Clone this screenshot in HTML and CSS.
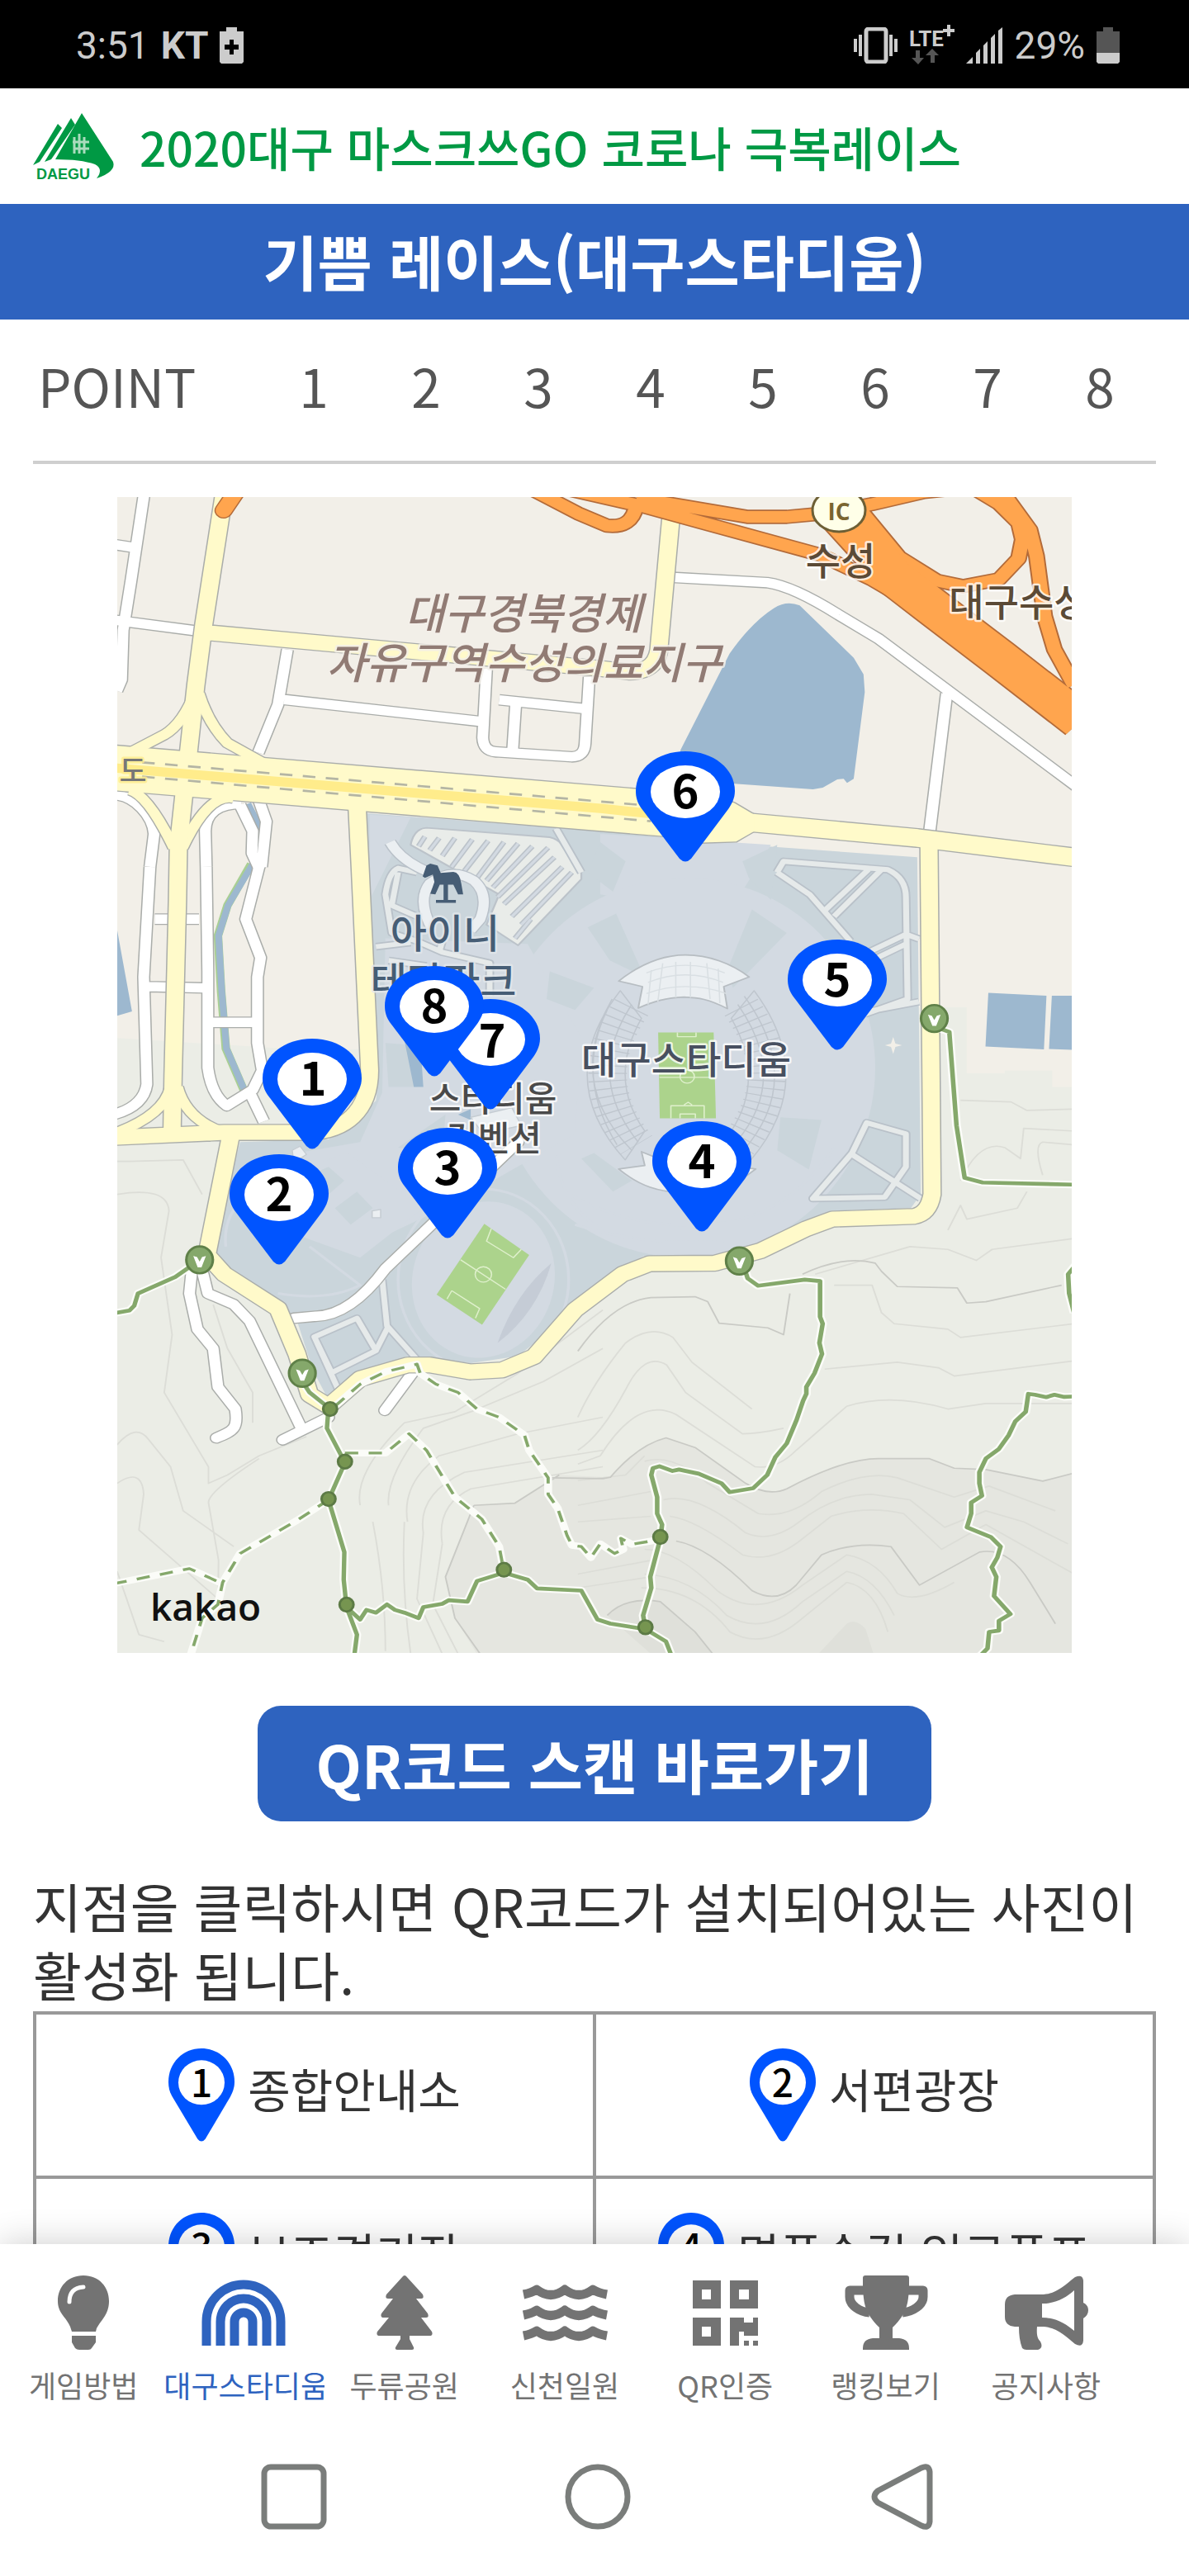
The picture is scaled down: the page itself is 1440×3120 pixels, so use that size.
FILE: index.html
```html
<!DOCTYPE html>
<html lang="ko">
<head>
<meta charset="utf-8">
<meta name="viewport" content="width=device-width, initial-scale=1">
<title>기쁨 레이스(대구스타디움)</title>
<link rel="stylesheet" href="styles.css">
</head>
<body>
<svg class="defs" aria-hidden="true">
  <symbol id="pin" viewBox="0 0 120 134" preserveAspectRatio="none">
    <path fill="#0054ff" d="M60 0C94 0 120 21 120 48C120 57 116 64 112 70L67 130Q60 137 53 130L6 68C2 62 0 56 0 48C0 21 26 0 60 0Z"/>
    <ellipse cx="60" cy="49" rx="42" ry="32" fill="#fff"/>
  </symbol>
</svg>

<div class="status">
  <div class="status-side">
    <span>3:51</span>
    <b>KT</b>
    <svg width="29" height="44" viewBox="0 0 29 44"><path fill="#ccc" fill-rule="evenodd" d="M8 0H21V5H29V42L27 44H2L0 42V5H8ZM12 15V21H6V27H12V33H17V27H23V21H17V15Z"/></svg>
  </div>
  <div class="status-side">
    <svg width="53" height="44" viewBox="0 0 53 44"><g fill="none" stroke="#ccc"><rect x="15" y="2" width="24" height="40" rx="3" stroke-width="5"/><path stroke-width="4" d="M2 14V30M8 9V35M45 9V35M51 14V30"/></g></svg>
    <svg width="55" height="50" viewBox="0 0 55 50"><text x="0" y="26" class="lte">LTE</text><path fill="none" stroke="#ccc" stroke-width="4" d="M41 7H55M48 0V14"/><path fill="#555" d="M8 31H13V40H18L11 48L3 40H8ZM28 29L36 37H31V46H26V37H20Z"/></svg>
    <svg width="45" height="44" viewBox="0 0 45 44"><path fill="#ccc" d="M0 44L8 36V44ZM12 44V31L17 26V44ZM21 44V22L26 17V44ZM30 44V13L35 8V44ZM39 44V4L44 0V44Z"/></svg>
    <span>29%</span>
    <svg width="28" height="44" viewBox="0 0 28 44"><path fill="#555" d="M8 0H20V5H28V31H0V5H8Z"/><path fill="#ccc" d="M0 31H28V42L26 44H2L0 42Z"/></svg>
  </div>
</div>

<header class="brand">
  <svg width="99" height="82" viewBox="0 0 99 82" role="img" aria-label="DAEGU">
    <g fill="#009944"><path d="M59 1L97 60Q101 72 77 80Q86 69 75 63Q58 57 27 57Z"/><path d="M46 7L51 15L22 57L14 60ZM30 14L35 19L8 60L0 64Z"/></g>
    <path fill="none" stroke="#a9dcbd" stroke-width="3" d="M50 30V50M56 26V50M62 30V50M48 36H68M50 44H68"/>
    <text x="4" y="81" class="logo-text">DAEGU</text>
  </svg>
  <span class="brand-name">2020대구 마스크쓰GO 코로나 극복레이스</span>
</header>
<h1 class="title">기쁨 레이스(대구스타디움)</h1>

<main class="content">
  <ol class="points">
    <li class="points-label">POINT</li>
    <li>1</li><li>2</li><li>3</li><li>4</li><li>5</li><li>6</li><li>7</li><li>8</li>
  </ol>

  <svg class="map" viewBox="142 602 1156 1400">
    <defs>
      <g id="roads-white">
        <path d="M117 20L75 340L50 520L45 700L30 740M20 208L75 218M20 483L280 522M570 590L540 790L478 965M560 772L1185 852M1200 660L1188 910Q1190 960 1230 962L1470 980Q1510 980 1512 930L1525 690M1240 773L1510 805M1292 795L1283 950M20 1118C90 1120 145 1200 148 1260L135 1380M425 1150C370 1150 310 1170 310 1250L313 1380M480 1140L503 1215L488 1380M420 1155L460 1250L458 1330L478 1380"/>
        <g transform="translate(0 1380)">
          <path d="M135 0L115 400L125 790Q115 870 20 900M313 0L318 380V730Q330 830 378 868L460 810L490 740L475 640V400L485 330L438 190L480 0L488 -20M150 190H290M130 435L305 440M330 565H465M455 830L495 925"/>
        </g>
        <g transform="translate(0 2730)">
          <path d="M268 110L260 200L285 330L335 400L350 540L405 620C415 690 400 700 345 725M303 130L318 200L400 240L450 300L612 685M555 732L700 650M878 625L965 490M1300 -350L880 110Q770 280 660 283L590 290" stroke-linecap="round"/>
        </g>
        <g transform="translate(1489) scale(1.033 1)">
          <path d="M290 328L580 347Q660 360 800 465L920 550L1530 1090M1130 750L1078 1250"/>
        </g>
      </g>
      <g id="roads-yellow">
        <path d="M370 20L305 500L280 720L225 1300L222 1500L208 2140L205 2330M310 528L1568 660L1654 672Q1745 670 1747 570L1786 80M790 1150L800 1380L830 2120C830 2270 750 2340 640 2345L370 2345L20 2363M390 2360L315 2790L370 2860L540 2985L600 3150L640 3298L700 3340L800 3240L950 3190H1020L1150 3215L1250 3208L1350 3160L1480 2990L1630 2860L1716 2822L1923 2820L2067 2775L2212 2695L2295 2660L2553 2650Q2600 2640 2610 2570L2600 1270"/>
      </g>
      <g id="roads-ramp">
        <path d="M280 740Q240 860 180 900L80 960M290 750Q320 860 380 930L490 1000M70 1100Q130 1120 210 1310M400 1130Q320 1110 238 1310M200 2180Q180 2280 30 2345M222 2180Q250 2300 370 2345"/>
      </g>
      <g id="road-main"><path d="M0 1018L1900 1200"/></g>
      <g id="road-main-east"><path d="M1900 1204L2047 1220L2563 1275L3080 1348"/></g>
      <g id="road-taper"><path d="M1880 1100L1985 1148L2047 1190V1250L1990 1288L1880 1292Z"/></g>
      <g id="highway" transform="translate(1489) scale(1.033 1)">
        <path d="M-60 0L200 70L400 135L740 245L900 335L1080 460M180 40L520 108H640L760 95L900 62L1060 18L1200 0M-170 -10L0 95L90 140Q165 150 178 70M870 90L985 255L1100 340L1180 360L1290 335L1350 260L1362 190L1350 130L1290 60L1220 10M1290 0L1385 155L1405 250L1430 470L1460 590L1520 720"/>
      </g>
      <g id="highway-wide" transform="translate(1489) scale(1.033 1)"><path d="M770 60L900 230L960 320L1080 430L1290 620L1540 850"/></g>
      <g id="trails">
        <g transform="translate(0 2730)">
          <path d="M20 272L70 262L85 245L97 200L215 140L290 80M617 520L640 560L700 615L695 690L752 815L700 950L750 1140L748 1240L757 1340L790 1440L780 1530M757 1340L800 1385L820 1350L850 1360L885 1330L910 1350L940 1360L985 1380L1000 1340L1060 1328L1080 1315L1140 1320L1170 1245L1255 1215L1330 1240L1360 1272L1500 1280L1551 1385L1592 1400L1703 1420L1768 1465L1790 1530"/>
        </g>
        <g transform="translate(1489 2730) scale(1.033 1)">
          <path d="M505 90L520 145L552 172L695 150L742 155V285L750 310L740 380L748 420L725 490L700 540V565L690 590L670 660L640 745L605 795L580 860L537 908L465 922L440 890L370 855L310 840L290 845L250 828L230 835L225 860L243 940V1000L258 1040L253 1090L222 1230L225 1270L200 1370L207 1420M1530 574L1490 576L1460 568L1435 577L1400 568L1380 565L1372 630L1340 665L1320 715L1290 765L1250 800L1230 850V890L1238 935L1205 960V1000L1192 1050L1265 1085L1295 1120L1285 1160L1268 1195L1282 1230L1275 1300L1325 1365L1290 1390V1425L1260 1430L1255 1490L1230 1520M1530 90L1502 130L1505 200L1520 270M1092 -770L1138 -750L1160 -410L1185 -220L1240 -203L1530 -195"/>
        </g>
      </g>
      <g id="trails-dashed">
        <g transform="translate(0 2730)">
          <path d="M720 610L800 530L880 485L980 457L990 490L1040 530L1110 560L1170 620L1240 650L1320 715L1335 770L1395 870V930L1425 980L1455 1080L1470 1115L1500 1120L1530 1160L1560 1110L1605 1145L1633 1130L1625 1090L1660 1112L1745 1095M752 780H880L955 710L1010 770L1100 940L1185 1020L1240 1120L1255 1210M700 950L600 1025L420 1145L365 1250L350 1330L300 1380L262 1520M20 1255L260 1200L365 1255"/>
        </g>
      </g>
      <g id="gate"><ellipse rx="42" ry="49" fill="#85a86b" stroke="#5f8048" stroke-width="8"/><path fill="#fff" d="M-20 -14L-8 -10L0 6L8 -10L20 -14L6 27H-6Z"/></g>
      <g id="node"><ellipse rx="22" ry="25" fill="#769550" stroke="#5c7a45" stroke-width="8"/></g>
    </defs>

    <rect x="142" y="602" width="1156" height="1400" fill="#f2efe8"/>
    <g transform="translate(130 590) scale(.3827 .3333)" fill="none" stroke-linejoin="round">
      <!-- terrain -->
      <path fill="#ebede6" d="M0 2000L700 2050L2600 1890H2720V2130H2840V2120H2990V2180H3070V4260H0Z"/>
      <path fill="#e5e6e0" d="M1592 3598Q1680 3480 1768 3455L1860 3490L2020 3620Q2090 3670 2150 3640Q2330 3530 2440 3530H2600L2680 3565L2780 3570L2960 3612L3070 3580V4260H1180L1100 4110L1070 3960L1160 3700L1290 3692L1430 3590Z"/>
      <path fill="#dfe0da" d="M1582 4100Q1640 4030 1750 4050L1860 4160L1930 4260H1740ZM2250 4240L2340 4130Q2370 4110 2400 4150L2430 4260Z"/>
      <g stroke="#dcddd7" stroke-width="5">
        <path d="M31 2450L70 2450L240 2445L300 2570M31 2570Q190 2540 195 2630L170 2800L205 3080L180 3290L320 3560V3620L380 3590L480 3520L630 3450M335 2970L380 3130L460 3290V3400M31 3620Q110 3560 115 3660L100 3790L350 4040L352 3900L320 3690Q320 3650 480 3530M31 3480Q90 3400 130 3460L200 3560L240 3720L400 3850M31 3940L100 4170L180 4195"/>
        <path d="M800 3700Q780 3580 940 3400L1100 3360L1300 3220L1568 2990M890 3700Q880 3600 1000 3420L1150 3360L1380 3250L1568 3130M950 3760Q930 3620 1050 3520L1300 3440L1568 3380M1000 3800Q980 3660 1130 3580L1568 3500M1060 3840Q1040 3700 1150 3640L1568 3560M840 3760Q880 4000 880 4230M940 3760Q930 4000 960 4240M1000 3800L980 4040L1060 4240M1060 3840L1030 4060L1110 4240"/>
        <path d="M1489 3500Q1560 3450 1640 3280Q1700 3140 1770 3190L1830 3290L2010 3440Q2060 3440 2140 3420M1489 3380Q1540 3250 1640 3110Q1720 3040 1790 3090L1850 3180L2040 3350M1489 3550L1560 3520Q1680 3300 1800 3370L2050 3560Q2120 3570 2180 3500L2340 3340Q2480 3290 2660 3350L2780 3330L3060 3330M1700 3540Q1790 3510 1900 3620L2060 3730Q2160 3750 2260 3650Q2400 3570 2500 3600L2680 3670L2790 3630L3000 3720M1760 3680Q1860 3650 2020 3800Q2100 3840 2190 3760Q2300 3660 2420 3660L2540 3680L2650 3780L2780 3720L2900 3760L3040 3840M1780 3740Q1860 3750 2010 3880Q2100 3910 2190 3830L2290 3740Q2400 3700 2520 3730L2640 3860L2780 3770L3060 3950M1700 3860Q1800 3860 1930 4010Q2060 4120 2200 3990L2340 3880Q2440 3900 2500 4020Q2560 4060 2680 3980M1700 3950Q1850 3960 1960 4100Q2080 4180 2200 4050L2340 3940Q2430 3960 2490 4100M1690 4000Q1860 4000 1970 4160Q2080 4230 2200 4110L2340 3980Q2430 4000 2470 4160"/>
        <path d="M2270 3205L2500 3180L2630 3200L2680 3230L3060 3175M2300 2900L2420 2900L2450 3000L2490 3040L2660 3060L2700 3090L3060 3040M2240 2860L2540 2760L2660 2770L2750 2810L2800 2770L3060 2730M2700 2520Q2760 2370 2840 2400L2890 2440L2900 2330L3060 2340M2700 2228L2860 2234L2910 2265L3060 2260M2960 2500Q2930 2390 2960 2380L3060 2390M2660 2700L2700 2610L2720 2660L2880 2620L2910 2560M1489 3610L1640 3590L1700 3520M1489 3700L1720 3650M1489 3760L1720 3740M1489 3950L1720 3900M1489 4000L1720 3960"/>
      </g>
      <g stroke="#c9cac5" stroke-width="5">
        <path d="M1400 3600L1568 3603L1592 3598Q1680 3480 1768 3455L1860 3490L2020 3620Q2090 3670 2150 3640Q2330 3530 2440 3530H2600L2680 3565L2780 3570L2960 3612L3070 3580M1160 3700L1290 3692L1430 3590M1160 3700L1070 3960L1100 4110L1180 4240M1800 3830Q1900 3850 2040 4010Q2120 4060 2180 3990L2260 3880Q2360 3830 2480 3850L2570 3990L2760 3870Q2850 3850 2920 3980L3000 4130"/>
        <path d="M2200 2860Q2330 2790 2430 2820L2450 2850L2500 2905L2690 2910L2720 2965L2780 2960L3020 2900M1489 3140Q1600 2960 1720 2945L1860 2942L1900 2960L1936 3038L2090 3055L2140 3080L2160 2930M1582 4100Q1640 4030 1750 4050L1860 4160L1930 4260"/>
      </g>

      <!-- water -->
      <g fill="#9db8cf">
        <path d="M1814 955L1969 605Q2040 490 2109 440Q2150 410 2191 430L2362 620L2393 680L2397 745L2362 1060L2341 1075L2330 1060L2310 1062L2264 1092L2233 1098L1985 1078L1800 1060Z"/>
        <path d="M20 1540L78 1905L20 1925ZM2788 1838L2972 1848L2964 2043L2779 2033ZM2989 1848H3070V2045L2980 2042Z"/>
      </g>
      <path stroke="#a9cf94" stroke-width="27" d="M455 1370L380 1520L350 1630L360 1830L375 2040L435 2200"/>
      <path stroke="#9db8cf" stroke-width="21" d="M445 1150L480 1230L460 1370L382 1520L352 1630L362 1830L377 2040L437 2200"/>

      <!-- stadium park -->
      <path fill="#cad5db" d="M820 1185L1568 1250L1902 1290L2563 1345L2574 2570L2543 2620L2295 2630L2067 2770L1902 2795H1696L1568 2880L1440 3028L1300 3158L1150 3183L950 3158L800 3218L700 3317L650 3208L600 3028L540 2959L350 2840L340 2730L420 2380L700 2370L850 2230L860 2120Z"/>
      <path fill="#d3dae2" d="M830 1190L960 1200L830 1500ZM1560 1260L2100 1300L1960 1560L1560 1480Z"/>
      <ellipse cx="1830" cy="2110" rx="600" ry="690" fill="#d3dae2"/>
      <path fill="#d3dae2" d="M880 1640L1330 1660L1500 2000L1480 2350L1100 2600L880 2720L700 2560L600 2420L800 2380L870 2200Z"/>
      <path fill="#d3dae2" d="M560 2500L760 2420L1000 2620L800 2800L560 2700Z"/>
      <path fill="#cad5db" d="M1070 2280L920 2400L1060 2420ZM880 2020L1000 2030L980 2180H890ZM720 2620L790 2560L840 2620L770 2680ZM640 2500L700 2470L750 2520L690 2580Z"/>
      <g fill="#cad5db">
        <path d="M1520 1600L1610 1550L1700 1780L1590 1720ZM2040 1535L2150 1620L1980 1820L1960 1760ZM1400 1760L1540 1820L1480 1900L1390 1860ZM2130 2290L2260 2300L2220 2480L2120 2410ZM1540 2420L1660 2520L1600 2560L1500 2440ZM1560 1290L1640 1360L1600 1470L1520 1400ZM2010 1360L2120 1300L2100 1500L2030 1420Z"/>
      </g>
      <ellipse cx="1190" cy="2880" rx="225" ry="285" fill="#d3dae2" transform="rotate(8 1190 2880)"/>
      <g stroke="#d3dae2" stroke-width="9">
        <path d="M1450 2560Q1650 2700 1900 2680T2300 2400M1480 2680Q1700 2760 1950 2740M1420 2430Q1440 2620 1568 2700M375 2760Q360 2600 520 2520M540 2930Q700 2960 800 2900L640 2760"/>
        <ellipse cx="1190" cy="2880" rx="270" ry="330"/>
      </g>
      <path fill="#c5ccd6" d="M1405 2820Q1360 3000 1235 3110Q1290 2930 1405 2820Z"/>
      <path fill="#9db8cf" d="M940 2010H990L1000 2180H970ZM1110 2280L1150 2260V2300Z"/>
      <path fill="#f2efe8" stroke="none" d="M2487 1998L2494 2022L2515 2028L2494 2034L2487 2060L2480 2034L2461 2028L2480 2022Z"/>

      <!-- car parks -->
      <g stroke-linejoin="round">
        <path fill="#e9ece9" stroke="#bcc3ca" stroke-width="6" d="M960 1300Q970 1240 1010 1238L1400 1272Q1430 1280 1440 1305L1500 1400V1425L1300 1665L1200 1590L1240 1480Z"/>
        <g stroke="#bcc3ca" stroke-width="18"><path d="M1005 1270L985 1305M1050 1275L1020 1320M1100 1275L1060 1340M1155 1280L1090 1380M1205 1285L1130 1395M1255 1290L1170 1420M1300 1295L1200 1430M1345 1305L1220 1455M1395 1310L1235 1490M1415 1345L1255 1515M1440 1380L1280 1560M1470 1400L1310 1590M1340 1570L1290 1640"/></g>
        <g stroke="#d3dae2" stroke-width="9"><path d="M1005 1270L985 1305M1050 1275L1020 1320M1100 1275L1060 1340M1155 1280L1090 1380M1205 1285L1130 1395M1255 1290L1170 1420M1300 1295L1200 1430M1345 1305L1220 1455M1395 1310L1235 1490M1415 1345L1255 1515M1440 1380L1280 1560M1470 1400L1310 1590M1340 1570L1290 1640"/></g>
        <g stroke="#b9c1c9" stroke-width="28">
          <path d="M1420 1240L1500 1400M980 1400L920 1385Q890 1400 880 1480L900 1620L980 1650L1060 1690L1210 1730V1850M920 1400L900 1520L980 1560M850 1670L960 1655M1050 1690L1060 1650M890 1720L1010 1740"/>
          <g transform="translate(1489 1380) scale(1.033 1)"><path d="M610 20L630 -20L950 10Q1005 40 1005 110L1010 480L880 535M610 20L710 100L835 270M890 10L755 160M930 10L785 180M890 310L1005 245L1045 262M900 340L1005 280M890 525L1045 490M885 930L1005 970V1090L940 1200L720 1205L840 1040ZM840 1045L1050 1205"/></g>
          <path d="M655 3088L790 3020L850 3138L710 3218ZM655 3088L735 3290M870 2880L885 3048L980 3170M890 3048L850 3138"/>
        </g>
        <g stroke="#e6eaea" stroke-width="18">
          <path d="M1420 1240L1500 1400M980 1400L920 1385Q890 1400 880 1480L900 1620L980 1650L1060 1690L1210 1730V1850M920 1400L900 1520L980 1560M850 1670L960 1655M1050 1690L1060 1650M890 1720L1010 1740"/>
          <g transform="translate(1489 1380) scale(1.033 1)"><path d="M610 20L630 -20L950 10Q1005 40 1005 110L1010 480L880 535M610 20L710 100L835 270M890 10L755 160M930 10L785 180M890 310L1005 245L1045 262M900 340L1005 280M890 525L1045 490M885 930L1005 970V1090L940 1200L720 1205L840 1040ZM840 1045L1050 1205"/></g>
          <path d="M655 3088L790 3020L850 3138L710 3218ZM655 3088L735 3290M870 2880L885 3048L980 3170M890 3048L850 3138"/>
        </g>
        <path stroke="#b9c1c9" stroke-width="40" d="M895 1290Q930 1360 1020 1400M1025 1600Q980 1500 1020 1440Q1090 1380 1160 1430Q1210 1480 1180 1570L1150 1610"/>
        <path stroke="#ebeff2" stroke-width="32" d="M895 1290Q930 1360 1020 1400M1025 1600Q980 1500 1020 1440Q1090 1380 1160 1430Q1210 1480 1180 1570L1150 1610"/>
        <path fill="#ebeff2" stroke="#c5ccd2" stroke-width="4" d="M1150 2290L1280 2255L1310 2320L1190 2350ZM585 2410L610 2395L630 2425L610 2440L588 2435ZM838 2630L865 2625V2655H838Z"/>
      </g>

      <!-- stadium -->
      <g transform="translate(1489 1380) scale(1.033 1)">
        <g stroke="#bfc6ce" stroke-width="4">
          <path d="M130 450Q-80 770 145 1065L205 960Q90 770 195 550ZM540 450Q740 770 530 1065L470 960Q575 770 470 550Z"/>
          <path d="M105 480Q-40 780 165 1030M90 520Q-10 760 120 1010M165 500Q20 760 185 1000M510 470Q700 780 500 1040M490 500Q650 770 485 1000"/>
          <path stroke-dasharray="4 24" stroke-width="118" d="M165 510Q10 770 180 1010M500 510Q660 770 490 1010"/>
        </g>
        <g stroke="#b7bdc2" stroke-width="5" fill="#ebeff2">
          <path d="M125 415C200 345 270 320 330 320C400 320 470 350 525 400L447 435L458 515C400 480 370 475 325 473C270 475 230 490 185 513L198 435Z"/>
          <path d="M125 1098L205 1085L195 1035L290 1080H400L480 1040L470 1085L545 1098C480 1160 400 1185 330 1182C250 1185 190 1160 125 1098Z"/>
        </g>
        <path stroke="#d9dfe3" stroke-width="4" d="M210 385Q330 330 450 385M215 420Q330 365 445 420M210 460Q330 410 455 460M260 350L245 490M300 345V475M345 345V475M395 350L405 480M430 370L435 495M225 375L215 500"/>
        <path fill="#acd38c" d="M246 602H416L423 914H251Z"/>
        <g stroke="#dff0cc" stroke-width="4"><path d="M250 765H420M285 914V868H387V914M305 602V617H362V602M313 914V898H360V914M325 865L338 855L350 865"/><ellipse cx="335" cy="762" rx="22" ry="24"/></g>
      </g>
      <path fill="#acd38c" d="M1193 2677L1335 2790L1186 3044L1042 2934Z"/>
      <g stroke="#dff0cc" stroke-width="4"><path d="M1118 2808L1260 2915M1215 2695L1200 2740L1285 2800L1310 2770M1090 2920L1075 2950M1090 2920L1178 2985L1165 3020"/><ellipse cx="1190" cy="2861" rx="26" ry="28"/></g>

      <!-- roads -->
      <use href="#roads-white" stroke="#aaadaa" stroke-width="42"/>
      <use href="#roads-white" stroke="#fff" stroke-width="34"/>
      <use href="#road-main" stroke="#aaadaa" stroke-width="170"/>
      <use href="#road-main-east" stroke="#aaadaa" stroke-width="72"/>
      <use href="#road-taper" stroke="#aaadaa" stroke-width="8"/>
      <use href="#roads-ramp" stroke="#aaadaa" stroke-width="42"/>
      <use href="#roads-yellow" stroke="#aaadaa" stroke-width="62"/>
      <use href="#roads-ramp" stroke="#fffaca" stroke-width="34"/>
      <use href="#roads-yellow" stroke="#fffaca" stroke-width="54"/>
      <use href="#road-main" stroke="#fffaca" stroke-width="162"/>
      <use href="#road-main-east" stroke="#fffaca" stroke-width="64"/>
      <use href="#road-taper" fill="#fffaca"/>
      <path stroke="#ffec8b" stroke-width="34" d="M20 1020L1568 1168L1730 1188"/>
      <path stroke="#b4b5a4" stroke-width="8" stroke-dasharray="40 33" d="M110 1000L1720 1158M110 1052L1720 1214"/>

      <!-- expressway -->
      <path stroke="#b36b3a" stroke-width="58" stroke-linecap="round" d="M368 85L430 -20"/>
      <path stroke="#ffa54e" stroke-width="50" stroke-linecap="round" d="M368 85L430 -20"/>
      <use href="#highway" stroke="#b36b3a" stroke-width="52"/>
      <use href="#highway-wide" stroke="#b36b3a" stroke-width="138"/>
      <use href="#highway" stroke="#ffa54e" stroke-width="42"/>
      <use href="#highway-wide" stroke="#ffa54e" stroke-width="128"/>

      <!-- walking trails -->
      <use href="#trails" stroke="#fbfcf8" stroke-width="27"/>
      <use href="#trails-dashed" stroke="#fbfcf8" stroke-width="25"/>
      <use href="#trails" stroke="#85a86b" stroke-width="14"/>
      <use href="#trails-dashed" stroke="#85a86b" stroke-width="10" stroke-dasharray="42 33"/>
      <use href="#gate" x="292" y="2808"/><use href="#gate" x="617" y="3220"/><use href="#gate" x="2000" y="2812"/><use href="#gate" x="2617" y="1931"/>
      <use href="#node" x="705" y="3350"/><use href="#node" x="752" y="3541"/><use href="#node" x="700" y="3677"/><use href="#node" x="757" y="4061"/><use href="#node" x="1255" y="3934"/><use href="#node" x="1750" y="3815"/><use href="#node" x="1703" y="4143"/>

      <!-- merry-go-round mark -->
      <path fill="#465d75" d="M998 1415L1010 1375L1022 1368L1045 1375L1055 1402L1095 1398Q1115 1400 1120 1440L1126 1480H1110L1095 1445H1078V1500H1103V1511H1040V1500H1064V1445H1052L1038 1480L1022 1478L1035 1435L1030 1408L1005 1420Z"/>
    </g>

    <ellipse cx="1016" cy="618" rx="32" ry="26" fill="#ffffe8" stroke="#6d5f35" stroke-width="3"/>
    <g class="map-label">
      <text x="1016" y="630" class="label-ic">IC</text>
      <g class="label-zone"><text x="634" y="762">대구경북경제</text><text x="635" y="822">자유구역수성의료지구</text></g>
      <g class="label-gate"><text x="1018" y="696">수성</text><text x="1234" y="746">대구수성</text></g>
      <text x="161" y="947" class="label-road">도</text>
      <g class="label-park"><text x="539" y="1148">아이니</text><text x="537" y="1206">테마파크</text></g>
      <g class="label-hall"><text x="597" y="1346">스타디움</text><text x="598" y="1394">컨벤션</text></g>
      <text x="831" y="1300" class="label-stadium">대구스타디움</text>
    </g>
    <text x="182" y="1963" class="kakao">kakao</text>

    <g class="map-pins">
      <use href="#pin" x="318" y="1258" width="120" height="134"/><text x="379" y="1327">1</text>
      <use href="#pin" x="278" y="1398" width="120" height="134"/><text x="338" y="1467">2</text>
      <use href="#pin" x="482" y="1366" width="120" height="134"/><text x="542" y="1435">3</text>
      <use href="#pin" x="790" y="1358" width="120" height="134"/><text x="850" y="1427">4</text>
      <use href="#pin" x="954" y="1138" width="120" height="134"/><text x="1014" y="1207">5</text>
      <use href="#pin" x="770" y="910" width="120" height="134"/><text x="830" y="979">6</text>
      <use href="#pin" x="534" y="1210" width="120" height="134"/><text x="596" y="1281">7</text>
      <use href="#pin" x="466" y="1170" width="120" height="134"/><text x="526" y="1239">8</text>
    </g>
  </svg>

  <button class="scan" type="button">QR코드 스캔 바로가기</button>

  <p class="guide">지점을 클릭하시면 QR코드가 설치되어있는 사진이 활성화 됩니다.</p>

  <table class="spots">
    <tr>
      <td><a class="spot" href="#spot1"><span class="pin"><svg><use href="#pin"/></svg><b>1</b></span><span class="spot-name">종합안내소</span></a></td>
      <td><a class="spot" href="#spot2"><span class="pin"><svg><use href="#pin"/></svg><b>2</b></span><span class="spot-name">서편광장</span></a></td>
    </tr>
    <tr>
      <td><a class="spot" href="#spot3"><span class="pin"><svg><use href="#pin"/></svg><b>3</b></span><span class="spot-name">보조경기장</span></a></td>
      <td><a class="spot" href="#spot4"><span class="pin"><svg><use href="#pin"/></svg><b>4</b></span><span class="spot-name">명품숲길 입구푯표</span></a></td>
    </tr>
  </table>
</main>

<nav class="tabs">
  <a href="#howto"><svg viewBox="0 0 112 90"><path fill="currentColor" d="M56 0C75 0 87 14 87 31C87 47 78 53 72 64L71 68H42L40 62C35 50 25 46 25 31C25 14 37 0 56 0ZM42 73H71V81L66 88Q65 90 62 90H51Q48 90 46 88L42 81Z"/><path fill="none" stroke="#fff" stroke-width="5" stroke-linecap="round" d="M39 32Q39 15 56 14"/></svg><span>게임방법</span></a>
  <a href="#stadium" class="active"><svg viewBox="0 0 112 90"><path fill="none" stroke="currentColor" stroke-width="11" d="M11 85V56A45 45 0 0 1 101 56V85M28 85V56A28 28 0 0 1 84 56V85M45 85V56A11 11 0 0 1 67 56V85"/></svg><span>대구스타디움</span></a>
  <a href="#duryu"><svg viewBox="0 0 112 90"><path fill="currentColor" d="M54 1Q56 -1 58 1L78 23Q80 28 76 28H70L84 46Q86 51 82 51H76L89 68Q91 73 86 73H62V77L67 87Q68 90 65 90H47Q44 90 45 87L51 77V73H26Q21 73 23 68L37 51H31Q26 51 28 46L42 28H36Q32 28 34 23Z"/></svg><span>두류공원</span></a>
  <a href="#sincheon"><svg viewBox="0 0 112 90"><path fill="none" stroke="currentColor" stroke-width="11" stroke-linejoin="round" d="M6 23Q16 21 22 17Q39 30 56 17Q73 30 90 17Q96 21 107 23M6 48Q16 46 22 42Q39 55 56 42Q73 55 90 42Q96 46 107 48M6 73Q16 71 22 67Q39 80 56 67Q73 80 90 67Q96 71 107 73"/></svg><span>신천일원</span></a>
  <a href="#qr"><svg viewBox="0 0 112 90"><path fill="currentColor" fill-rule="evenodd" d="M17 6H51V40H17ZM28 17V29H39V17ZM62 6H96V40H62ZM73 17V29H85V17ZM17 51H51V85H17ZM28 62V74H39V62ZM62 51H79V57H90V51H96V73H79V68H73V85H62ZM79 79H85V85H79ZM90 79H96V85H90Z"/></svg><span>QR인증</span></a>
  <a href="#ranking"><svg viewBox="0 0 112 90"><path fill="currentColor" d="M31 0H81Q84 0 84 3V14C83 38 80 47 64 63V76H72Q84 77 84 88V90H28V88Q28 77 40 76H48V63C32 47 29 38 28 14V3Q28 0 31 0Z"/><path fill="none" stroke="currentColor" stroke-width="11" stroke-linejoin="round" d="M30 18H12V26C12 36 24 44 36 45M82 18H101V26C101 36 88 44 76 45"/></svg><span>랭킹보기</span></a>
  <a href="#notice"><svg viewBox="0 0 112 90"><path fill="currentColor" fill-rule="evenodd" d="M18 23H50C68 23 78 12 91 2Q100 -2 101 6V33Q107 36 107 42T101 52V79Q100 88 91 83C78 72 68 62 50 62H45C44 73 46 77 49 80Q53 88 46 90H32Q29 90 27 88C24 80 23 72 23 62H18Q6 61 6 50V35Q6 24 18 23ZM51 34V51C68 51 80 59 90 67V18C80 27 68 34 51 34Z"/></svg><span>공지사항</span></a>
</nav>

<div class="system">
  <button type="button" aria-label="Recents"><svg viewBox="0 0 80 80"><rect x="4" y="4" width="72" height="72" rx="8"/></svg></button>
  <button type="button" aria-label="Home"><svg viewBox="0 0 80 80"><circle cx="40" cy="40" r="36"/></svg></button>
  <button type="button" aria-label="Back"><svg viewBox="0 0 80 80"><path d="M64 5Q73 1 74 10V70Q73 79 64 75L11 47Q3 40 11 33Z"/></svg></button>
</div>
</body>
</html>
```
FILE: styles.css
```css
* { box-sizing: border-box; }

body {
  margin: 0;
  height: 100vh;
  display: flex;
  flex-direction: column;
  background: #fff;
  color: #333;
  font-family: "Noto Sans CJK KR", sans-serif;
}

a { color: inherit; text-decoration: none; }
.defs { position: absolute; width: 0; height: 0; }

/* phone status bar */
.status {
  flex: none;
  display: flex;
  justify-content: space-between;
  align-items: center;
  height: 107px;
  padding: 2px 84px 0 92px;
  background: #000;
  color: #ccc;
  font: 46px/60px Roboto, sans-serif;
}
.status-side { display: flex; align-items: center; gap: 14px; }
.lte { font: bold 26px Roboto, sans-serif; fill: #ccc; }

.brand {
  flex: none;
  display: flex;
  align-items: center;
  gap: 30px;
  height: 140px;
  padding: 0 40px;
}
.brand svg { flex: none; overflow: visible; }
.brand-name { color: #009944; font-size: 57px; font-weight: 500; line-height: 80px; white-space: nowrap; }
.logo-text { font: bold 18px "Liberation Sans", sans-serif; fill: #009944; }

.title {
  flex: none;
  margin: 0;
  padding-bottom: 4px;
  background: #2e63bf;
  color: #fff;
  font-size: 72px;
  font-weight: 700;
  line-height: 136px;
  text-align: center;
}

.content {
  flex: 1 1 0;
  min-height: 0;
  overflow-y: auto;
  scrollbar-width: none;
  padding: 0 40px;
}

.points {
  display: grid;
  grid-template-columns: 2fr repeat(8, 1fr);
  margin: 0 0 40px;
  padding: 31px 0 44px;
  border-bottom: 4px solid #cfcfcf;
  list-style: none;
  color: #555;
  font-size: 64px;
  line-height: 96px;
  text-align: center;
}
.points-label { padding-left: 6px; text-align: left; }

.map { display: block; width: 85%; margin: 0 auto; }
.map-label { text-anchor: middle; font-weight: 500; stroke: #fff; stroke-opacity: .8; stroke-width: 5px; paint-order: stroke; stroke-linejoin: round; }
.label-ic { font: bold 28px "Open Sans", sans-serif; fill: #7a6530; stroke: none; }
.label-zone { font-size: 52px; font-style: italic; fill: #917b74; stroke: #f2efe8; }
.label-gate { font-size: 46px; fill: #5b4a36; }
.label-road { font-size: 36px; fill: #777; stroke: #ffec8b; }
.label-park { font-size: 48px; fill: #465d75; stroke: #e3e8ec; }
.label-hall { font-size: 42px; fill: #4a4a4a; }
.label-stadium { font-size: 46px; fill: #485060; }
.kakao { font: 600 46px "Open Sans", sans-serif; fill: #111; }
.map-pins { font-size: 56px; font-weight: 700; text-anchor: middle; fill: #000; }

.scan {
  display: block;
  width: 60%;
  margin: 64px auto 60px;
  padding: 0;
  border: 0;
  border-radius: 28px;
  background: #2e63bf;
  color: #fff;
  font: 700 72px/140px "Noto Sans CJK KR", sans-serif;
}

.guide { margin: 0 0 4px; font-size: 64px; line-height: 83px; word-break: keep-all; }

.spots { width: 100%; table-layout: fixed; border-collapse: collapse; font-size: 56px; line-height: 80px; }
.spots td { height: 199px; padding: 0; border: 4px solid #999; }
.spot { display: flex; align-items: center; justify-content: center; gap: 16px; }
.spot-name { padding-bottom: 18px; }
.pin { position: relative; width: 80px; height: 113px; }
.pin svg { display: block; width: 100%; height: 100%; }
.pin b { position: absolute; inset: 0 0 auto; color: #000; font-size: 46px; font-weight: 500; line-height: 78px; text-align: center; }

.tabs {
  position: relative;
  flex: none;
  display: flex;
  height: 210px;
  padding: 38px 76px 0 4px;
  background: #fff;
  box-shadow: 0 0 40px rgba(0, 0, 0, .2);
  color: #737373;
  font-size: 36px;
  line-height: 44px;
}
.tabs a { flex: 1 1 0; min-width: 0; display: flex; flex-direction: column; align-items: center; gap: 20px; }
.tabs svg { width: 112px; height: 90px; }
.tabs span { max-width: 100%; overflow: hidden; white-space: nowrap; }
.tabs .active { color: #2e63bf; }

.system {
  position: relative;
  flex: none;
  display: flex;
  align-items: center;
  justify-content: center;
  gap: 288px;
  height: 192px;
  padding-left: 8px;
  background: #fff;
}
.system button { width: 80px; height: 80px; padding: 0; border: 0; background: none; }
.system svg { display: block; fill: none; stroke: #7a7d7b; stroke-width: 7; }
```
